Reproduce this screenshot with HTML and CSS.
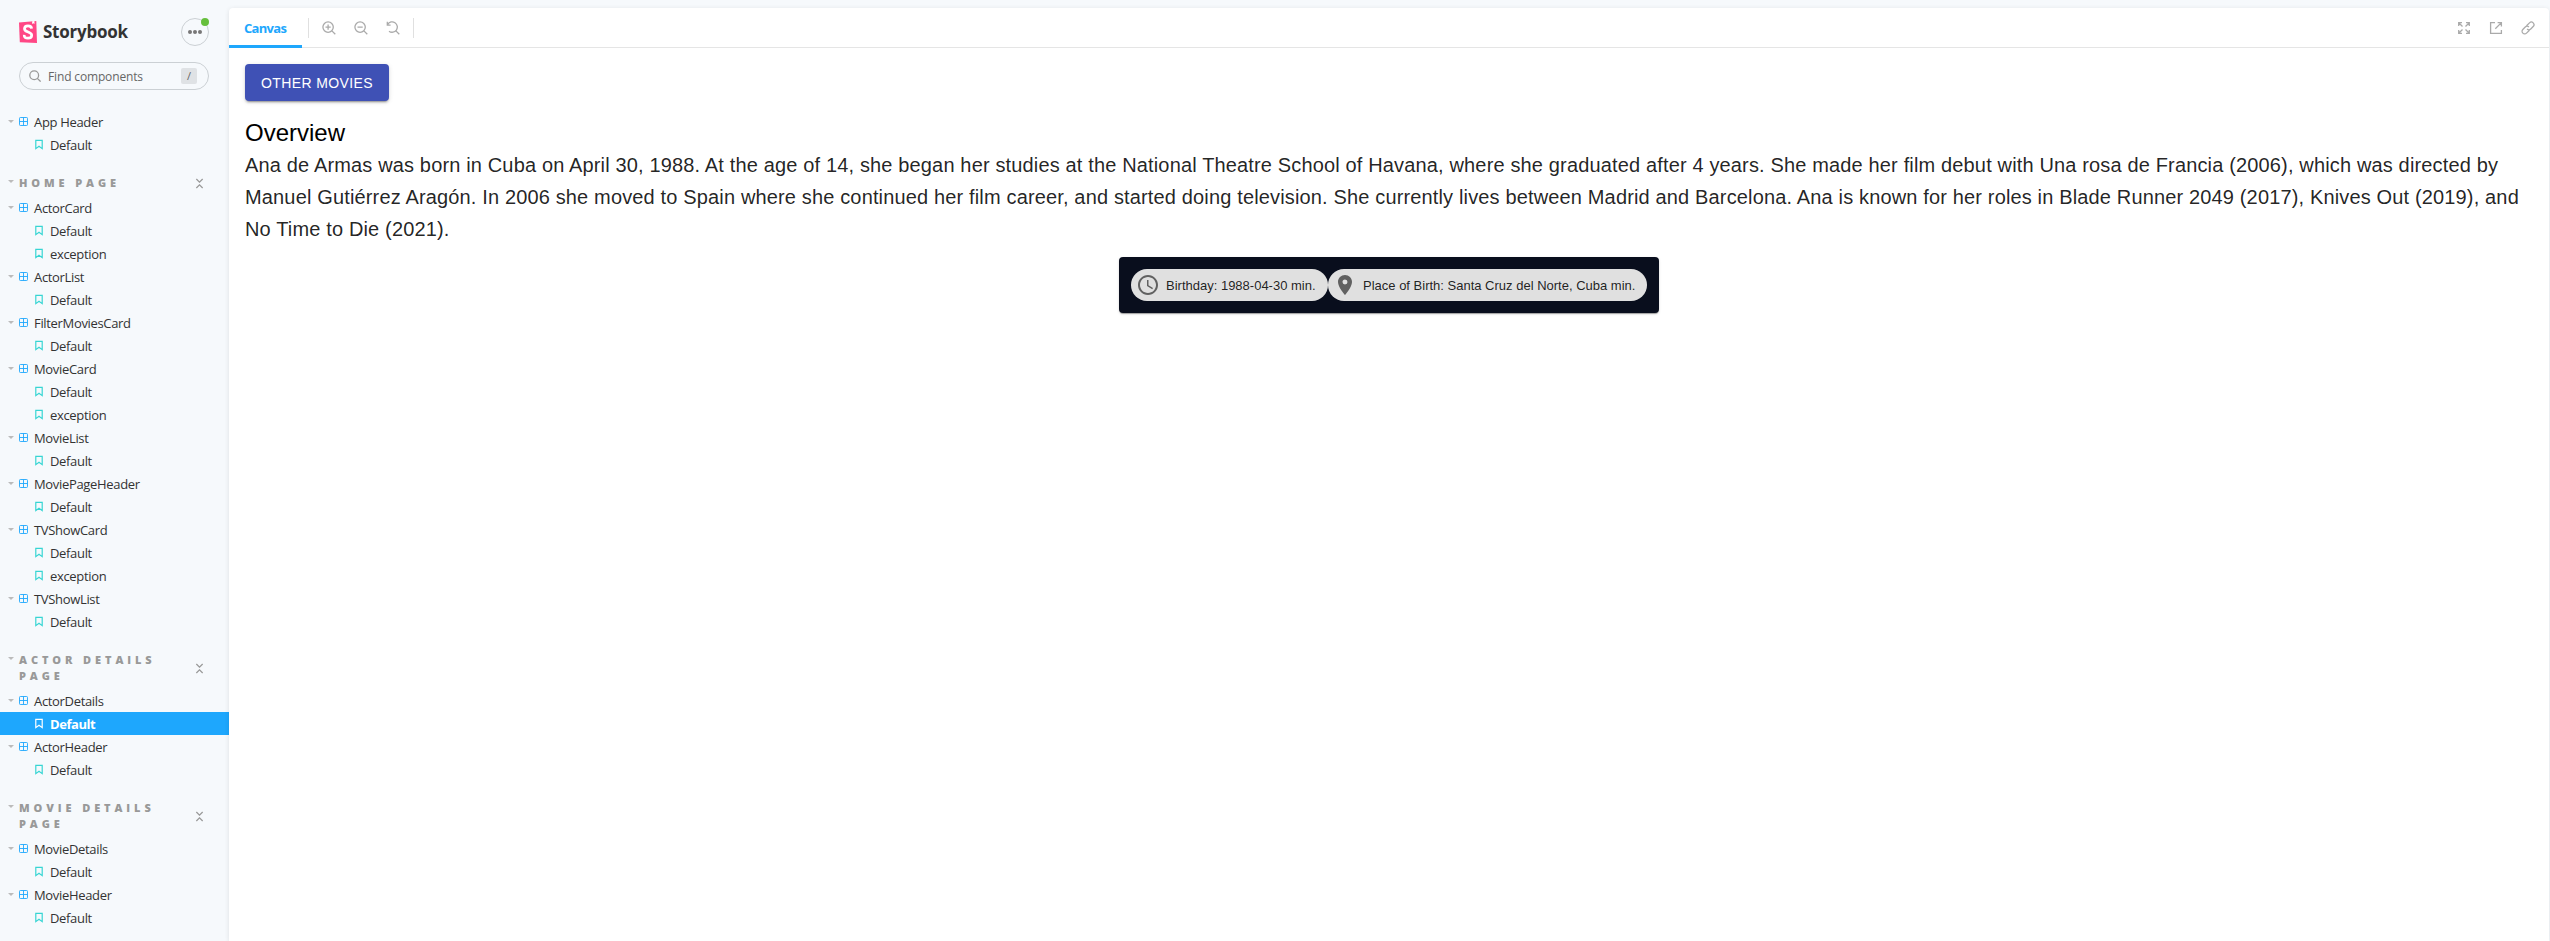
FILE: index.html
```
<!DOCTYPE html>
<html lang="en">
<head>
<meta charset="utf-8">
<title>ActorDetails - Default · Storybook</title>
<link rel="stylesheet" href="styles.css">
</head>
<body>
<svg class="defs" aria-hidden="true">
  <symbol id="component" viewBox="0 0 14 14"><path fill="none" stroke="currentColor" stroke-width="1.4" d="M2 .8h10q1.200 0 1.200 1.200v10q0 1.200-1.200 1.200H2Q.8 13.200.8 12V2Q.8.8 2 .8zM7 1v12M1 7h12"/></symbol>
  <symbol id="bookmark" viewBox="0 0 10 12"><path fill="none" stroke="currentColor" stroke-width="1.300" d="M1.500 1.500h7v9L5 7.900 1.500 10.500z"/></symbol>
  <symbol id="collapse" viewBox="0 0 10 12"><path fill="none" stroke="currentColor" stroke-width="1.400" d="M1.500 1 5 4.500 8.500 1M1.500 11 5 7.500 8.500 11"/></symbol>
</svg>
<div class="app">
  <aside class="sidebar">
    <header class="brand">
      <svg class="brand-mark" viewBox="0 0 18 22"><path fill="#ff4785" d="M0 1.500 17.300 0 18 22 .8 21.200z"/><path fill="#fff" d="m13.200.3 2.200-.2.100 3-1.200-.8-1.200.8z"/><path fill="none" stroke="#fff" stroke-width="2.700" d="M12.600 7.600C12.500 5.400 11.400 4.800 9 4.800S5.500 5.900 5.500 7.700c0 4 7.200 2.700 7.200 6.500 0 2-1.300 3-3.700 3-2.600 0-3.900-1-3.800-3.300"/></svg>
      <span class="brand-name">Storybook</span>
      <button class="menu"><i></i><i></i><i></i><b class="dot"></b></button>
    </header>
    <div class="search">
      <svg viewBox="0 0 12 12"><path fill="none" stroke="#999" stroke-width="1.300" d="M8.600 8.600 11.600 11.600M9.600 5.200a4.400 4.400 0 1 1-8.800 0 4.400 4.400 0 0 1 8.800 0z"/></svg>
      <span>Find components</span><kbd>/</kbd>
    </div>
    <nav class="tree">
      <div class="item"><svg><use href="#component"/></svg>App Header</div>
      <div class="story"><svg><use href="#bookmark"/></svg>Default</div>
      <div class="group"><span>Home Page</span><svg><use href="#collapse"/></svg></div>
      <div class="item"><svg><use href="#component"/></svg>ActorCard</div>
      <div class="story"><svg><use href="#bookmark"/></svg>Default</div>
      <div class="story"><svg><use href="#bookmark"/></svg>exception</div>
      <div class="item"><svg><use href="#component"/></svg>ActorList</div>
      <div class="story"><svg><use href="#bookmark"/></svg>Default</div>
      <div class="item"><svg><use href="#component"/></svg>FilterMoviesCard</div>
      <div class="story"><svg><use href="#bookmark"/></svg>Default</div>
      <div class="item"><svg><use href="#component"/></svg>MovieCard</div>
      <div class="story"><svg><use href="#bookmark"/></svg>Default</div>
      <div class="story"><svg><use href="#bookmark"/></svg>exception</div>
      <div class="item"><svg><use href="#component"/></svg>MovieList</div>
      <div class="story"><svg><use href="#bookmark"/></svg>Default</div>
      <div class="item"><svg><use href="#component"/></svg>MoviePageHeader</div>
      <div class="story"><svg><use href="#bookmark"/></svg>Default</div>
      <div class="item"><svg><use href="#component"/></svg>TVShowCard</div>
      <div class="story"><svg><use href="#bookmark"/></svg>Default</div>
      <div class="story"><svg><use href="#bookmark"/></svg>exception</div>
      <div class="item"><svg><use href="#component"/></svg>TVShowList</div>
      <div class="story"><svg><use href="#bookmark"/></svg>Default</div>
      <div class="group"><span>Actor Details Page</span><svg><use href="#collapse"/></svg></div>
      <div class="item"><svg><use href="#component"/></svg>ActorDetails</div>
      <div class="story selected"><svg><use href="#bookmark"/></svg>Default</div>
      <div class="item"><svg><use href="#component"/></svg>ActorHeader</div>
      <div class="story"><svg><use href="#bookmark"/></svg>Default</div>
      <div class="group"><span>Movie Details Page</span><svg><use href="#collapse"/></svg></div>
      <div class="item"><svg><use href="#component"/></svg>MovieDetails</div>
      <div class="story"><svg><use href="#bookmark"/></svg>Default</div>
      <div class="item"><svg><use href="#component"/></svg>MovieHeader</div>
      <div class="story"><svg><use href="#bookmark"/></svg>Default</div>
    </nav>
  </aside>
  <main class="panel">
    <div class="toolbar">
      <div class="tab"><span>Canvas</span></div>
      <i class="sep"></i>
      <div class="tools">
        <svg viewBox="0 0 14 14"><path d="M9.900 9.900 13.300 13.300M11.300 6.100A5.200 5.200 0 1 1 .9 6.100a5.200 5.200 0 0 1 10.400 0zM6.100 3.500v5.200M3.500 6.100h5.200"/></svg>
        <svg viewBox="0 0 14 14"><path d="M9.900 9.900 13.300 13.300M11.300 6.100A5.200 5.200 0 1 1 .9 6.100a5.200 5.200 0 0 1 10.400 0zM3.500 6.100h5.200"/></svg>
        <svg viewBox="0 0 14 14"><path d="M9.900 9.900 13.300 13.300M1.700 3.300A5.200 5.200 0 1 1 3 10.200M1.300.8v3.300h3.300"/></svg>
      </div>
      <i class="sep"></i>
      <div class="tools end">
        <svg viewBox="0 0 14 14"><path d="M1.700 5V1.700H5M1.700 1.700l3.800 3.800M9 1.700h3.300V5M12.300 1.700 8.500 5.500M1.700 9v3.300H5M1.700 12.300l3.800-3.800M12.300 9v3.300H9M12.300 12.300 8.500 8.500"/></svg>
        <svg viewBox="0 0 14 14"><path d="M6 1.600H1.600v10.800h10.800V9M8.600 1.600h3.800v3.800M12.400 1.600 6.300 7.700"/></svg>
        <svg viewBox="0 0 14 14"><g transform="rotate(-45 7 7)"><path d="M6.500 9.600H2.300a2.600 2.600 0 0 1 0-5.200h3.400a2.600 2.600 0 0 1 2.600 2.600M7.500 4.400h4.200a2.600 2.600 0 0 1 0 5.200H8.300A2.600 2.600 0 0 1 5.700 7"/></g></svg>
      </div>
    </div>
    <section class="content">
      <button class="primary">OTHER MOVIES</button>
      <h5>Overview</h5>
      <p>Ana de Armas was born in Cuba on April 30, 1988. At the age of 14, she began her studies at the National Theatre School of Havana, where she graduated after 4 years. She made her film debut with Una rosa de Francia (2006), which was directed by Manuel Gutiérrez Aragón. In 2006 she moved to Spain where she continued her film career, and started doing television. She currently lives between Madrid and Barcelona. Ana is known for her roles in Blade Runner 2049 (2017), Knives Out (2019), and No Time to Die (2021).</p>
      <div class="chips">
        <div class="chip birthday"><svg viewBox="0 0 24 24"><path d="M11.990 2C6.470 2 2 6.480 2 12s4.470 10 9.990 10C17.520 22 22 17.520 22 12S17.520 2 11.990 2zM12 20c-4.420 0-8-3.580-8-8s3.580-8 8-8 8 3.580 8 8-3.580 8-8 8zm.5-13H11v6l5.250 3.150.75-1.230-4.500-2.670z"/></svg><span>Birthday: 1988-04-30 min.</span></div>
        <div class="chip place"><svg viewBox="0 0 24 24"><path d="M12 2C8.130 2 5 5.130 5 9c0 5.250 7 13 7 13s7-7.750 7-13c0-3.870-3.130-7-7-7zm0 9.500a2.500 2.500 0 0 1 0-5 2.500 2.500 0 0 1 0 5z"/></svg><span>Place of Birth: Santa Cruz del Norte, Cuba min.</span></div>
      </div>
    </section>
  </main>
</div>
</body>
</html>
```
FILE: styles.css
```
* { box-sizing: border-box; }
body { margin: 0; background: #f6f9fc; font-family: "Open Sans", "Noto Sans", sans-serif; color: #333; overflow: hidden; }
.defs { position: absolute; width: 0; height: 0; }
.app { display: flex; height: 941px; padding-right: 1px; }
.sidebar { width: 229px; flex: none; padding-top: 18px; }
.brand { display: flex; align-items: center; height: 28px; padding: 0 20px 0 19px; }
.brand-mark { width: 18px; height: 22px; }
.brand-name { margin-left: 6px; font: 700 17px/22px "Open Sans", sans-serif; letter-spacing: -.25px; }
.menu { position: relative; margin-left: auto; width: 28px; height: 28px; border: 1px solid #cbd0d4; border-radius: 50%; background: none; padding: 0; display: flex; align-items: center; justify-content: center; gap: 1px; }
.menu i { width: 4px; height: 4px; border-radius: 50%; background: #777; }
.dot { position: absolute; top: -1px; right: -1px; width: 8px; height: 8px; border-radius: 50%; background: #66bf3c; }
.search { display: flex; align-items: center; margin: 16px 20px 0 19px; height: 28px; border: 1px solid #cbd0d4; border-radius: 14px; padding: 0 11px 0 9px; font-size: 12px; letter-spacing: -.15px; color: #666; }
.search svg { width: 12px; height: 12px; margin-right: 7px; }
.search kbd { margin-left: auto; width: 16px; height: 16px; border-radius: 2px; background: #dfe2e5; font: 11px/16px "Open Sans", sans-serif; text-align: center; }
.tree { padding-top: 20px; font-size: 13px; letter-spacing: -.33px; }
.item, .story { display: flex; align-items: center; height: 23px; }
.item::before, .group::before { content: ""; border: 3px solid transparent; border-top-color: #bbb; border-bottom: 0; }
.item { padding-left: 8px; }
.item svg { width: 9px; height: 9px; margin: 0 6px 0 5px; color: #1ea7fd; }
.story { padding-left: 34px; }
.story svg { width: 10px; height: 11px; margin-right: 6px; color: #37d5d3; }
.selected { background: #1ea7fd; color: #fff; font-weight: 700; letter-spacing: -.45px; }
.selected svg { color: #fff; }
.group { display: flex; align-items: flex-start; padding: 19px 25px 5px 8px; font: 800 11px/16px "Open Sans", sans-serif; letter-spacing: 3.900px; text-transform: uppercase; color: #999; }
.group::before { margin-top: 5px; }
.group span { width: 155px; margin-left: 5px; }
.group svg { width: 9px; height: 11px; margin-left: auto; align-self: center; }
.panel { flex: 1; min-width: 0; margin-top: 8px; background: #fff; border-radius: 4px 4px 0 0; box-shadow: 0 1px 5px rgba(0,0,0,.1); }
.toolbar { display: flex; align-items: center; height: 40px; border-bottom: 1px solid #e5e5e5; }
.tab { width: 73px; height: 40px; border-bottom: 3px solid #1ea7fd; color: #1ea7fd; padding-left: 15px; font-weight: 700; font-size: 13px; letter-spacing: -.7px; line-height: 40px; }
.sep { width: 1px; height: 20px; background: #e0e0e0; margin-left: 6px; }
.tools { display: flex; gap: 18px; margin: 0 7px 0 13px; }
.tools.end { margin: 0 14px 0 auto; }
.tools svg { width: 14px; height: 14px; fill: none; stroke: #aaa; stroke-width: 1.300; }
.content { padding: 16px; font-family: "Liberation Sans", Arial, sans-serif; color: rgba(0,0,0,.87); }
.primary { display: block; width: 144px; height: 37px; border: 0; border-radius: 4px; background: #3f51b5; color: #fff; font: 14px "Liberation Sans", Arial, sans-serif; letter-spacing: .4px; white-space: nowrap; padding: 0; box-shadow: 0 3px 1px -2px rgba(0,0,0,.2), 0 2px 2px rgba(0,0,0,.14), 0 1px 5px rgba(0,0,0,.12); }
h5 { margin: 16px 0 0; font-weight: 400; font-size: 24px; line-height: 32px; color: #000; }
p { margin: 0; font-size: 20px; line-height: 32px; letter-spacing: .15px; }
.chips { display: flex; width: 540px; height: 56px; margin: 12px auto 0; padding: 12px; border-radius: 4px; background: #090e1d; box-shadow: 0 2px 1px -1px rgba(0,0,0,.2), 0 1px 1px rgba(0,0,0,.14), 0 1px 3px rgba(0,0,0,.12); }
.chip { display: flex; align-items: center; height: 32px; padding-left: 5px; border-radius: 16px; background: #e0e0e0; font-size: 13px; white-space: nowrap; }
.chip svg { width: 24px; height: 24px; margin-right: 6px; fill: #616161; flex: none; }
.birthday { width: 197px; }
.place { width: 319px; }
```
